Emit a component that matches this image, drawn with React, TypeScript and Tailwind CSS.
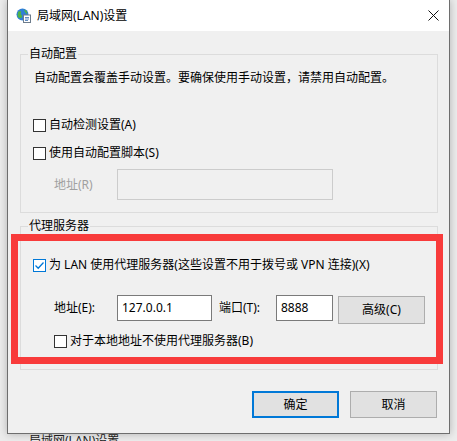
import type { ReactNode } from "react";

function Box({ checked }: { checked?: boolean }) {
  return (
    <span
      className={
        "flex h-[13px] w-[13px] shrink-0 items-center justify-center border bg-white " +
        (checked ? "border-[#0078d7]" : "border-[#333333]")
      }
    >
      {checked && (
        <svg width="11" height="11" viewBox="0 0 11 11">
          <path d="M1.5 5.5 L4.2 8.2 L9.5 2.5" fill="none" stroke="#0078d7" strokeWidth="1.3" />
        </svg>
      )}
    </span>
  );
}

function Check({ checked, children, className = "" }: { checked?: boolean; children: ReactNode; className?: string }) {
  return (
    <div className={"flex h-4 items-center gap-[3px] leading-4 " + className}>
      <Box checked={checked} />
      <span>{children}</span>
    </div>
  );
}

function Button({ children, primary }: { children: ReactNode; primary?: boolean }) {
  return (
    <button
      className={
        "flex h-[27px] w-[87px] items-center justify-center bg-[#e1e1e1] text-black " +
        (primary ? "border-2 border-[#0078d7]" : "border border-[#adadad]")
      }
    >
      {children}
    </button>
  );
}

function LanIcon() {
  return (
    <svg width="15" height="15" viewBox="0 0 15 15">
      <circle cx="6.5" cy="6.5" r="6" fill="#2f7fd8" />
      <path d="M2 4 C4 2 6 3 5 5 C4 7 7 7 6 9 C5 11 2 10 1.5 8 Z" fill="#4fb348" />
      <path d="M8 1.5 C10 2 12 4 11 6 C9.5 5 8.5 4 8 1.5 Z" fill="#4fb348" />
      <rect x="7.5" y="7" width="7" height="7.5" fill="#ffffff" stroke="#6d7c8c" strokeWidth="1" />
      <path d="M9 9.5 H13 M9 11 H13 M9 12.5 H12" stroke="#3a6fb0" strokeWidth="0.8" />
    </svg>
  );
}

export default function App() {
  return (
    <div className="relative h-[441px] w-[457px] overflow-hidden bg-[#ececec] font-['Noto_Sans','Noto_Sans_CJK_SC',sans-serif] text-[12px] text-black">
      <div className="relative ml-[7px] w-[443px] border-x border-b border-[#6e6e6e] bg-[#f0f0f0] shadow-[0_0_8px_rgba(0,0,0,0.25)]">
        <div className="flex h-[31px] items-center bg-white pl-[8px]">
          <LanIcon />
          <span className="ml-[6px] leading-4">局域网(LAN)设置</span>
          <svg className="ml-auto mr-[10px]" width="11" height="11" viewBox="0 0 11 11">
            <path d="M0.5 0.5 L10.5 10.5 M10.5 0.5 L0.5 10.5" stroke="#111" strokeWidth="1" />
          </svg>
        </div>

        <fieldset className="ml-[12px] mt-[15px] w-[418px] border border-[#dcdcdc] p-0">
          <legend className="ml-[7px] px-[1px] leading-4">自动配置</legend>
          <div className="pb-[12px] pl-[12px] pt-[8px]">
            <p className="ml-[1px] leading-4">自动配置会覆盖手动设置。要确保使用手动设置，请禁用自动配置。</p>
            <Check className="mt-[31px]">自动检测设置(A)</Check>
            <Check className="mt-[12px]">使用自动配置脚本(S)</Check>
            <div className="mt-[8px] flex items-center">
              <span className="ml-[21px] w-[63px] text-[#a0a0a0]">地址(R)</span>
              <span className="h-[31px] w-[216px] border border-[#cccccc] bg-[#f0f0f0]" />
            </div>
          </div>
        </fieldset>

        <fieldset className="ml-[12px] mt-[5px] w-[418px] border border-[#dcdcdc] p-0">
          <legend className="ml-[7px] px-[1px] leading-4">代理服务器</legend>
          <div className="pb-[20px] pl-[12px] pt-[23px]">
            <Check checked>为 LAN 使用代理服务器(这些设置不用于拨号或 VPN 连接)(X)</Check>
            <div className="mt-[22px] flex h-[29px] items-start">
              <span className="ml-[21px] w-[63px] leading-[26px]">地址(E):</span>
              <span className="h-[26px] w-[95px] border border-[#7a7a7a] bg-white pl-[4px] leading-[24px]">127.0.0.1</span>
              <span className="ml-[7px] w-[57px] leading-[26px]">端口(T):</span>
              <span className="h-[26px] w-[57px] border border-[#7a7a7a] bg-white pl-[4px] leading-[24px]">8888</span>
              <button className="ml-[5px] mt-[1px] flex h-[28px] w-[87px] items-center justify-center border border-[#adadad] bg-[#e1e1e1]">
                高级(C)
              </button>
            </div>
            <Check className="ml-[21px] mt-[9px]">对于本地地址不使用代理服务器(B)</Check>
          </div>
        </fieldset>

        <div className="flex justify-end gap-[11px] pb-[15px] pr-[12px] pt-[21px]">
          <Button primary>确定</Button>
          <Button>取消</Button>
        </div>

        <div className="pointer-events-none absolute left-[3px] top-[234px] h-[130px] w-[432px] border-[7px] border-[#f83b3b]" />
      </div>

      <div className="h-[8px] overflow-hidden pl-[29px]">
        <div className="-mt-[1px] leading-4 text-[#222]">局域网(LAN)设置</div>
      </div>
    </div>
  );
}
